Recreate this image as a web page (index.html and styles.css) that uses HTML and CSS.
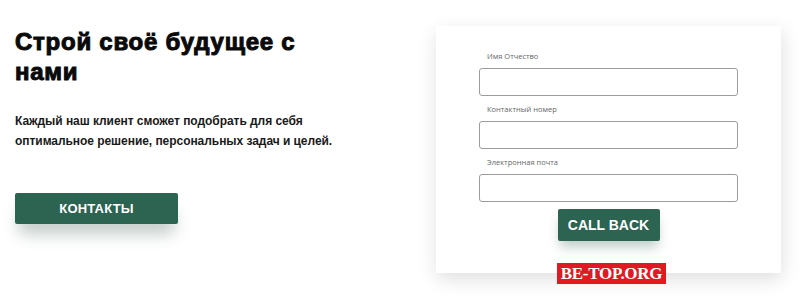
FILE: index.html
```html
<!DOCTYPE html>
<html lang="ru">
<head>
<meta charset="utf-8">
<link rel="stylesheet" href="styles.css">
</head>
<body>
<div class="page">
  <section class="intro">
    <h1 class="title">Строй своё будущее с<br>нами</h1>
    <p class="lead">Каждый наш клиент сможет подобрать для себя<br>оптимальное решение, персональных задач и целей.</p>
    <button class="btn btn-contacts">КОНТАКТЫ</button>
  </section>
  <section class="card">
    <form class="form">
      <div class="field">
        <label class="label">Имя Отчество</label>
        <input class="input" type="text">
      </div>
      <div class="field">
        <label class="label">Контактный номер</label>
        <input class="input" type="text">
      </div>
      <div class="field">
        <label class="label">Электронная почта</label>
        <input class="input" type="text">
      </div>
      <button class="btn btn-call" type="button">CALL BACK</button>
    </form>
    <div class="badge">BE-TOP.ORG</div>
  </section>
</div>
</body>
</html>
```

FILE: styles.css
```css
* { box-sizing: border-box; }
html, body { margin: 0; padding: 0; background: #ffffff; }
body { font-family: "Liberation Sans", Arial, sans-serif; color: #111; width: 801px; height: 302px; overflow: hidden; }

.page { display: flex; align-items: flex-start; }

.intro { width: 436px; padding-left: 15px; }

.title {
  margin: 27px 0 0 0;
  font-size: 24px;
  line-height: 30px;
  font-weight: 700;
  color: #0a0a0a;
  -webkit-text-stroke: 1px #0a0a0a;
  letter-spacing: 0.75px;
}

.lead {
  margin: 24px 0 0 0;
  font-size: 12px;
  line-height: 20px;
  font-weight: 700;
  color: #1a1a1a;
  letter-spacing: -0.05px;
}

.btn {
  border: 0;
  font-family: "Liberation Sans", Arial, sans-serif;
  font-weight: 700;
  color: #fff;
  background: #2c6351;
  border-radius: 2px;
  cursor: pointer;
}

.btn-contacts {
  margin-top: 42px;
  width: 163px;
  height: 31px;
  font-size: 13px;
  letter-spacing: 0.2px;
  box-shadow: 0 14px 16px -4px rgba(40, 70, 60, 0.28);
}

.card {
  position: relative;
  margin-top: 26px;
  width: 345px;
  height: 247px;
  background: #fff;
  box-shadow: 1px 6px 18px rgba(0, 0, 0, 0.13);
}

.form {
  display: flex;
  flex-direction: column;
  align-items: center;
  padding-top: 24px;
  gap: 7px;
}

.field { display: flex; flex-direction: column; width: 259px; }

.label {
  padding-left: 8px;
  font-family: "Open Sans", "Liberation Sans", sans-serif;
  font-size: 7.5px;
  line-height: 12px;
  color: #666;
  margin-bottom: 6px;
}

.input {
  width: 259px;
  height: 28px;
  border: 1px solid #9c9c9c;
  border-radius: 3px;
  background: #fff;
}

.btn-call {
  width: 102px;
  height: 32px;
  font-size: 14px;
  box-shadow: 0 8px 12px -2px rgba(40, 90, 75, 0.3);
}

.badge {
  position: absolute;
  left: 121px;
  top: 237px;
  width: 109px;
  height: 21px;
  background: #e01a22;
  color: #fff;
  font-family: "Liberation Serif", "Times New Roman", serif;
  font-weight: 700;
  font-size: 17px;
  line-height: 21px;
  text-align: center;
  letter-spacing: -0.3px;
}
```
